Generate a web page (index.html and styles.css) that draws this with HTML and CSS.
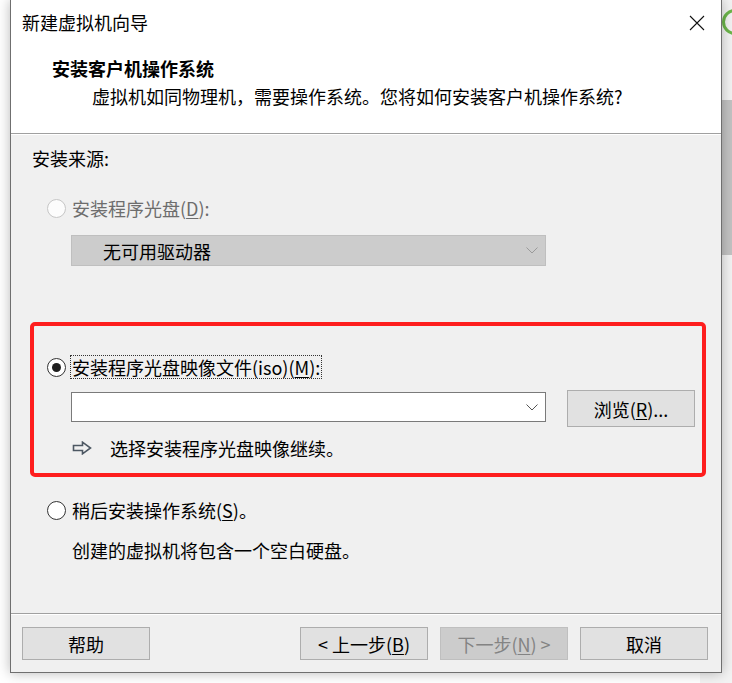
FILE: index.html
```html
<!DOCTYPE html>
<html lang="zh-CN">
<head>
  <meta charset="UTF-8">
  <meta name="viewport" content="width=device-width, initial-scale=1.0">
  <title>新建虚拟机向导</title>
  <link rel="stylesheet" href="styles.css">
</head>
<body>
  <div class="backdrop">
    <svg class="status-ring" width="30" height="30" viewBox="0 0 30 30">
      <circle cx="15" cy="15" r="11.5" fill="none" stroke="#6cb64a" stroke-width="3"/>
    </svg>
    <div class="scroll-thumb"></div>
  </div>

  <div class="wizard">
    <div class="wizard-head">
      <div class="titlebar">
        <span class="title">新建虚拟机向导</span>
        <svg class="close" width="16" height="16" viewBox="0 0 16 16">
          <path d="M1 1 L15 15 M15 1 L1 15" stroke="#111" stroke-width="1.1" fill="none"/>
        </svg>
      </div>
      <h1>安装客户机操作系统</h1>
      <p class="subtitle">虚拟机如同物理机，需要操作系统。您将如何安装客户机操作系统?</p>
    </div>
    <div class="sep"></div>

    <div class="wizard-body">
      <div class="section-label">安装来源:</div>

      <div class="option disabled">
        <span class="radio"></span>
        <span class="label">安装程序光盘(<u>D</u>):</span>
      </div>
      <div class="combo combo-disabled">
        <span class="combo-text">无可用驱动器</span>
        <svg class="chevron" width="12" height="7" viewBox="0 0 12 7">
          <polyline points="0.5,0.5 6,6 11.5,0.5" fill="none" stroke="#9a9a9a" stroke-width="1"/>
        </svg>
      </div>

      <div class="highlight">
        <div class="option">
          <span class="radio checked"></span>
          <span class="label focused">安装程序光盘映像文件(iso)(<u>M</u>):</span>
        </div>
        <div class="iso-row">
          <div class="combo combo-input">
            <span class="combo-text"></span>
            <svg class="chevron" width="12" height="7" viewBox="0 0 12 7">
              <polyline points="0.5,0.5 6,6 11.5,0.5" fill="none" stroke="#555" stroke-width="1"/>
            </svg>
          </div>
          <button class="btn browse">浏览(<u>R</u>)...</button>
        </div>
        <div class="hint">
          <svg class="hint-arrow" width="20" height="14" viewBox="0 0 20 14">
            <polygon points="1.5,4.5 10.5,4.5 10.5,1.2 18.5,7 10.5,12.8 10.5,9.5 1.5,9.5" fill="none" stroke="#4d5863" stroke-width="1.6" stroke-linejoin="miter"/>
          </svg>
          <span>选择安装程序光盘映像继续。</span>
        </div>
      </div>

      <div class="option later">
        <span class="radio"></span>
        <span class="label">稍后安装操作系统(<u>S</u>)。</span>
      </div>
      <div class="note">创建的虚拟机将包含一个空白硬盘。</div>
    </div>

    <div class="sep"></div>
    <div class="wizard-foot">
      <button class="btn">帮助</button>
      <div class="nav-buttons">
        <button class="btn">&lt; 上一步(<u>B</u>)</button>
        <button class="btn btn-disabled">下一步(<u>N</u>) &gt;</button>
        <button class="btn">取消</button>
      </div>
    </div>
  </div>
</body>
</html>
```

FILE: styles.css
```css
body {
  margin: 0;
  background-color: #ffffff;
  font-family: "Noto Sans CJK SC", "Noto Sans", sans-serif;
  font-size: 18px;
  color: #000;
  position: relative;
  width: 732px;
  height: 683px;
  overflow: hidden;
}

/* app behind the dialog */
.backdrop {
  position: absolute;
  left: 700px;
  top: 0;
  width: 32px;
  height: 683px;
  background-color: #f3f3f3;
}
.status-ring {
  position: absolute;
  left: 20px;
  top: 7px;
}
.scroll-thumb {
  position: absolute;
  left: 22px;
  top: 100px;
  width: 10px;
  height: 155px;
  background-color: #c3c3c3;
}

.wizard {
  position: relative;
  z-index: 1;
  margin-left: 10px;
  width: 712px;
  height: 673px;
  box-sizing: border-box;
  border: 1px solid #6f6f6f;
  border-top: none;
  background-color: #f0f0f0;
  box-shadow: 0 0 12px rgba(0, 0, 0, 0.28);
}

.wizard-head {
  height: 133px;
  box-sizing: border-box;
  background-color: #fff;
  padding-top: 10px;
}
.titlebar {
  display: flex;
  justify-content: space-between;
  align-items: center;
  height: 24px;
  line-height: 24px;
  padding-left: 11px;
  padding-right: 16px;
}
.close {
  margin-top: 1px;
}
.wizard-head h1 {
  margin: 22px 0 0 41px;
  font-size: 18px;
  font-weight: bold;
  line-height: 24px;
}
.subtitle {
  margin: 4px 0 0 81px;
  line-height: 24px;
}

.sep {
  border-top: 1px solid #a0a0a0;
  border-bottom: 1px solid #ffffff;
}

.wizard-body {
  height: 478px;
  box-sizing: border-box;
  padding: 11px 0 0 21px;
}
.section-label {
  line-height: 24px;
}

.option {
  display: flex;
  align-items: center;
  height: 24px;
  line-height: 24px;
  margin-top: 26px;
  margin-left: 15px;
}
.option .label {
  margin-left: 6px;
}
.option.disabled .label {
  color: #6d6d6d;
}
.radio {
  width: 19px;
  height: 19px;
  box-sizing: border-box;
  border: 1px solid #333;
  border-radius: 50%;
  background-color: #fff;
  display: flex;
  align-items: center;
  justify-content: center;
}
.option.disabled .radio {
  border-color: #c6c6c6;
  background-color: #fcfcfc;
}
.radio.checked::after {
  content: "";
  width: 9px;
  height: 9px;
  border-radius: 50%;
  background-color: #1f1f1f;
}
.label.focused {
  margin-left: 4px;
  line-height: 22px;
  padding: 0 1px;
  border: 1px dotted #333;
}
.label u {
  text-underline-offset: 2px;
}

.combo {
  display: flex;
  align-items: center;
  justify-content: space-between;
  box-sizing: border-box;
  width: 475px;
  padding-right: 7px;
}
.combo-disabled {
  height: 31px;
  margin-top: 15px;
  margin-left: 39px;
  background-color: #cccccc;
  border: 1px solid #bfbfbf;
  padding-left: 31px;
}
.combo-input {
  height: 30px;
  background-color: #fff;
  border: 1px solid #7a7a7a;
}

.highlight {
  margin-top: 56px;
  margin-left: -2px;
  width: 676px;
  box-sizing: border-box;
  border: 4px solid #fe1e1e;
  border-radius: 5px;
  padding: 29px 0 13px 13px;
}
.highlight .option {
  margin-top: 0;
  margin-left: 0;
}
.iso-row {
  display: flex;
  align-items: flex-start;
  margin-top: 11px;
  margin-left: 24px;
}
.iso-row .combo-input {
  margin-top: 2px;
}

.btn {
  width: 128px;
  height: 33px;
  box-sizing: border-box;
  background-color: #e1e1e1;
  border: 1px solid #adadad;
  font-family: inherit;
  font-size: 18px;
  line-height: 24px;
  color: #000;
  padding: 0;
}
.btn u {
  text-underline-offset: 2px;
}
.browse {
  height: 37px;
  margin-left: 21px;
}
.btn-disabled {
  background-color: #cccccc;
  border-color: #bfbfbf;
  color: #838383;
}

.hint {
  display: flex;
  align-items: center;
  height: 24px;
  line-height: 24px;
  margin-top: 9px;
  margin-left: 25px;
}
.hint-arrow {
  margin-right: 18px;
}

.option.later {
  margin-top: 21px;
}
.note {
  margin-top: 16px;
  margin-left: 40px;
  line-height: 24px;
}

.wizard-foot {
  display: flex;
  align-items: flex-start;
  height: 57px;
  box-sizing: border-box;
  padding: 12px 13px 0 11px;
}
.nav-buttons {
  display: flex;
  gap: 12px;
  margin-left: auto;
}
```
